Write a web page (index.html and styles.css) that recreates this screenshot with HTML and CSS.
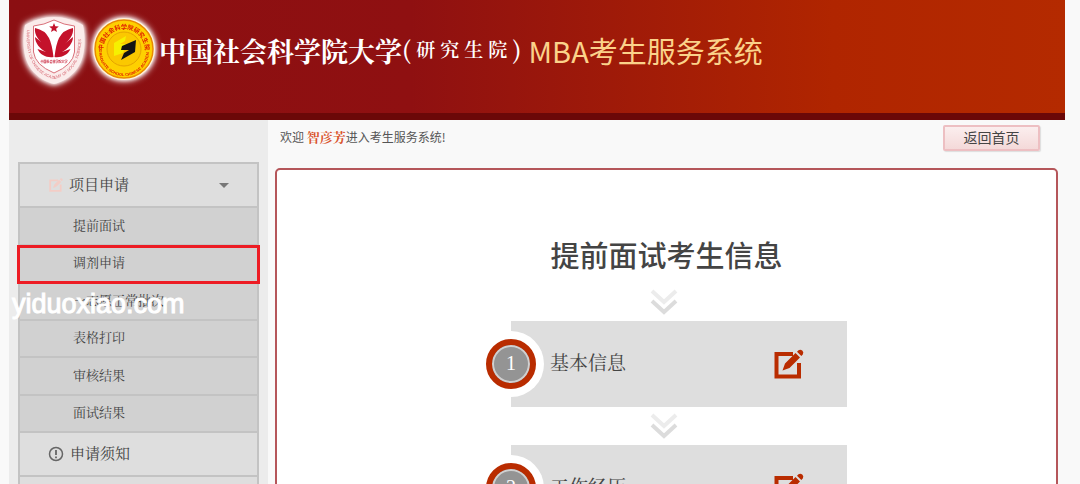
FILE: index.html
```html
<!DOCTYPE html>
<html lang="zh-CN">
<head>
  <meta charset="UTF-8">
  <meta name="viewport" content="width=device-width, initial-scale=1.0">
  <title>MBA考生服务系统</title>
  <link rel="stylesheet" href="styles.css">
</head>
<body>
  <svg class="defs" width="0" height="0" aria-hidden="true">
    <symbol id="icon-edit" viewBox="0 0 30 30">
      <path d="M19 5H2.500V27.500H25V14" fill="none" stroke="currentColor" stroke-width="4"/>
      <path d="M8.500 21.500L11 14.500L21.500 4L26 8.500L15.500 19ZM23 2.700L24.500 1.200Q26.500 0 28.500 1.700Q30 3.500 28.800 5.500L27.300 7Z" fill="currentColor"/>
    </symbol>
    <symbol id="icon-down" viewBox="0 0 28 26">
      <path d="M2 2L14 13L26 2" fill="none" stroke="#ececec" stroke-width="4"/>
      <path d="M2 12L14 23L26 12" fill="none" stroke="#dcdcdc" stroke-width="4"/>
    </symbol>
  </svg>

  <div class="page">
    <header class="header">
      <svg class="logo logo-crest" viewBox="0 0 64 70" role="img" aria-label="中国社会科学院大学">
        <path d="M32 2C42 2 52 5 61 10C64 26 63 43 55 54C48 63 40 67 32 69C24 67 16 63 9 54C1 43 0 26 3 10C12 5 22 2 32 2Z" fill="#fbeceb"/>
        <path d="M32 5Q42 10 52.500 11V37Q51 50 32 58Q13 50 11.500 37V11Q22 10 32 5Z" fill="#fff" stroke="#d9707a" stroke-width="1"/>
        <path d="M32 8l1.300 3.300 3.500.2-2.700 2.200.9 3.400-3-1.900-3 1.900.9-3.400-2.700-2.200 3.500-.2z" fill="#c4122b"/>
        <path d="M31.500 42C25 43 18 40 15.500 34L24 37C18 34 13 28 13 22L24 31C17 26 12 20 13 13Q23 15 27 23Q30 29 31.500 42Z" fill="#c4122b"/>
        <path d="M32.500 42C39 43 46 40 48.500 34L40 37C46 34 51 28 51 22L40 31C47 26 52 20 51 13Q41 15 37 23Q34 29 32.500 42Z" fill="#c4122b"/>
        <text class="crest-name" x="32" y="48" text-anchor="middle">中国社会科学院大学</text>
        <path id="crest-arc" d="M5 15C3 43 13 60 32 64C51 60 61 43 59 15" fill="none"/>
        <text class="crest-ring"><textPath href="#crest-arc">UNIVERSITY OF CHINESE ACADEMY OF SOCIAL SCIENCES</textPath></text>
      </svg>
      <svg class="logo logo-seal" viewBox="0 0 64 64" role="img" aria-label="中国社会科学院研究生院">
        <circle cx="32" cy="32" r="31" fill="#fff3d8"/>
        <circle cx="32" cy="32" r="29" fill="#fed000" stroke="#e98a00" stroke-width="1.500"/>
        <circle cx="32" cy="32" r="17" fill="#fbc800" stroke="#e6a400" stroke-width="1"/>
        <path d="M22 26L34 19L33 24L28 27L34 27L31 36L22 39Z" fill="#f6f000"/>
        <path d="M30 29L44 23L43 35L29 43L32 36L37 33L29 33Z" fill="#141414"/>
        <path id="seal-top" d="M11 33A21 21 0 0 1 53 33" fill="none"/>
        <path id="seal-bottom" d="M7 34A25 25 0 0 0 57 34" fill="none"/>
        <text class="seal-name"><textPath href="#seal-top" startOffset="50%" text-anchor="middle">中国社会科学院研究生院</textPath></text>
        <text class="seal-ring"><textPath href="#seal-bottom" startOffset="50%" text-anchor="middle">GRADUATE SCHOOL CHINESE ACADEMY</textPath></text>
      </svg>
      <h1 class="brand">
        <span class="brand-school">中国社会科学院大学</span>
        <span class="brand-dept"><span class="paren">(</span><span>研</span><span>究</span><span>生</span><span>院</span><span class="paren">)</span></span>
        <span class="brand-system">MBA考生服务系统</span>
      </h1>
    </header>

    <div class="columns">
      <nav class="sidebar">
        <ul class="menu">
          <li>
            <a class="menu-item" href="#">
              <svg class="menu-icon faded"><use href="#icon-edit"/></svg>
              <span>项目申请</span>
              <span class="caret"></span>
            </a>
            <ul class="submenu">
              <li><a href="#">提前面试</a></li>
              <li class="marked"><a href="#">调剂申请</a></li>
              <li><a href="#">一志愿正常批次</a></li>
              <li><a href="#">表格打印</a></li>
              <li><a href="#">审核结果</a></li>
              <li><a href="#">面试结果</a></li>
            </ul>
          </li>
          <li>
            <a class="menu-item" href="#">
              <svg class="menu-icon" viewBox="0 0 16 16">
                <circle cx="8" cy="8" r="6.500" fill="none" stroke="#666" stroke-width="1.500"/>
                <path d="M8 4V9M8 10.500V12.300" stroke="#666" stroke-width="1.800"/>
              </svg>
              <span>申请须知</span>
            </a>
          </li>
          <li><a class="menu-item" href="#" aria-label="更多"></a></li>
        </ul>
        <div class="watermark">yiduoxiao.com</div>
      </nav>

      <main class="content">
        <div class="topbar">
          <p class="welcome">欢迎 <strong>智彦芳</strong>进入考生服务系统!</p>
          <button class="home-btn" type="button">返回首页</button>
        </div>
        <section class="panel">
          <h2>提前面试考生信息</h2>
          <div class="steps">
            <svg class="arrow"><use href="#icon-down"/></svg>
            <a class="step" href="#">
              <span class="badge">1</span>
              <span class="step-name">基本信息</span>
              <svg class="step-edit"><use href="#icon-edit"/></svg>
            </a>
            <svg class="arrow"><use href="#icon-down"/></svg>
            <a class="step" href="#">
              <span class="badge">2</span>
              <span class="step-name">工作经历</span>
              <svg class="step-edit"><use href="#icon-edit"/></svg>
            </a>
          </div>
        </section>
      </main>
    </div>
  </div>
</body>
</html>
```

FILE: styles.css
```css
* {
  box-sizing: border-box;
}
html {
  overflow: hidden;
}
body {
  margin: 0;
  background: #f9f9f9;
  color: #444;
  font-family: "Liberation Serif", "Noto Serif CJK SC", "Noto Sans CJK SC", serif;
}
h1, h2, p, ul {
  margin: 0;
  padding: 0;
  font-weight: normal;
}
ul {
  list-style: none;
}
a {
  color: inherit;
  text-decoration: none;
}
.defs {
  display: block;
}
.page {
  margin: 0 15px 0 9px;
}

/* header */
.header {
  display: flex;
  height: 120px;
  padding: 15px 13px 0;
  border-bottom: 7px solid #6b0808;
  background: linear-gradient(90deg, #8b0f12 0%, #8f1011 38%, #b02500 78%, #b42a00 100%);
}
.logo {
  flex: none;
  overflow: visible;
  filter: drop-shadow(0 0 2px #fff) drop-shadow(0 0 3px #fff);
}
.logo-crest {
  width: 64px;
  height: 70px;
}
.logo-seal {
  width: 64px;
  height: 64px;
  margin: 2px 0 0 6px;
}
.crest-name, .crest-ring, .seal-name, .seal-ring {
  font-family: "Liberation Sans", "Noto Sans CJK SC", sans-serif;
}
.crest-name {
  font-size: 3px;
  font-weight: bold;
  fill: #c4122b;
}
.crest-ring {
  font-size: 4px;
  fill: #d4606c;
}
.seal-name {
  font-size: 6px;
  font-weight: bold;
  fill: #e02000;
}
.seal-ring {
  font-size: 4px;
  font-weight: bold;
  fill: #e02000;
}
.brand {
  display: flex;
  align-items: center;
  height: 70px;
  padding-left: 3px;
  white-space: nowrap;
  color: #fff;
}
.brand-school {
  font-family: "Noto Serif CJK SC", "Noto Sans CJK SC", serif;
  font-size: 27px;
  font-weight: bold;
}
.brand-dept {
  display: flex;
  align-items: center;
  gap: 5px;
  padding-bottom: 4px;
  font-family: "Noto Serif CJK SC", "Noto Sans CJK SC", serif;
  font-size: 19px;
  font-weight: 600;
}
.paren {
  font-size: 24px;
}
.brand-system {
  padding-left: 7px;
  color: #fbd28a;
  font-family: "Noto Sans CJK SC", sans-serif;
  font-size: 29px;
}

/* layout */
.columns {
  display: flex;
}
.sidebar {
  position: relative;
  flex: none;
  width: 259px;
  padding: 42px 9px 0;
  background: #ececec;
}
.content {
  flex: 1;
  padding: 0 7px;
}

/* sidebar menu */
.menu {
  border: 2px solid #c3c3c3;
}
.menu-item {
  display: flex;
  align-items: center;
  gap: 6px;
  height: 44px;
  padding: 0 28px;
  border-bottom: 2px solid #c3c3c3;
  background: #dedede;
  font-size: 15px;
}
.menu-item span {
  padding-bottom: 3px;
}
.menu-icon {
  width: 16px;
  height: 16px;
}
.faded {
  width: 14px;
  height: 14px;
  margin-left: 1px;
  color: #f3cdc6;
}
.menu-item .caret {
  margin-left: auto;
  padding: 0;
  border: 5px solid transparent;
  border-top-color: #777;
  border-bottom: 0;
}
.submenu {
  display: grid;
  grid-auto-rows: 1fr;
  min-height: 225px;
  background: #d1d1d1;
}
.submenu li {
  position: relative;
  border-bottom: 2px solid #c3c3c3;
}
.submenu a {
  display: flex;
  align-items: center;
  height: 100%;
  padding: 0 0 3px 53px;
  font-size: 13px;
}
.marked::after {
  content: "";
  position: absolute;
  inset: -1px -3px -3px;
  border: 3px solid #ed1c24;
}
.watermark {
  position: absolute;
  top: 168px;
  left: 3px;
  color: #fff;
  font-family: "Liberation Sans", Arial, sans-serif;
  font-size: 27px;
  line-height: 32px;
  -webkit-text-stroke: 1px #fff;
}

/* content */
.topbar {
  display: flex;
  justify-content: space-between;
  padding: 5px 18px 0 5px;
}
.welcome {
  padding-top: 2px;
  font-family: "Noto Sans CJK SC", sans-serif;
  font-size: 12px;
  line-height: 20px;
  color: #555;
}
.welcome strong {
  color: #d9532c;
  font-family: "Noto Serif CJK SC", serif;
  font-size: 13px;
}
.home-btn {
  width: 97px;
  height: 26px;
  padding: 0 0 2px;
  border: 2px solid #edbfc2;
  border-radius: 2px;
  background: linear-gradient(#fbeeee, #f4d9d9);
  box-shadow: 1px 1px 1px #ddd;
  color: #444;
  font-family: "Noto Sans CJK SC", sans-serif;
  font-size: 14px;
  line-height: 20px;
}
.panel {
  min-height: 340px;
  margin-top: 17px;
  padding-top: 64px;
  border: 2px solid #b5565a;
  border-radius: 5px;
  background: #fff;
}
.panel h2 {
  font-family: "Noto Sans CJK SC", sans-serif;
  font-size: 29px;
  font-weight: 500;
  line-height: 40px;
  text-align: center;
}
.steps {
  display: flex;
  flex-direction: column;
  width: 361px;
  margin: 0 auto;
  padding-top: 9px;
}
.arrow {
  align-self: center;
  width: 28px;
  height: 26px;
  margin: 6px 5px 6px 0;
}
.step {
  display: flex;
  align-items: center;
  height: 86px;
  padding-right: 43px;
  background: linear-gradient(#dedede, #dedede) 25px 0 no-repeat;
}
.badge {
  flex: none;
  width: 50px;
  height: 50px;
  border: 6px solid #b92c00;
  border-radius: 50%;
  background: #949494;
  box-shadow: inset 0 0 0 2px #d0d0d0, 0 0 0 8px #fff;
  color: #fff;
  font-size: 20px;
  line-height: 36px;
  text-align: center;
}
.step-name {
  flex: 1;
  padding: 0 0 6px 14px;
  font-size: 19px;
}
.step-edit {
  width: 30px;
  height: 30px;
  color: #b92c00;
}
```
